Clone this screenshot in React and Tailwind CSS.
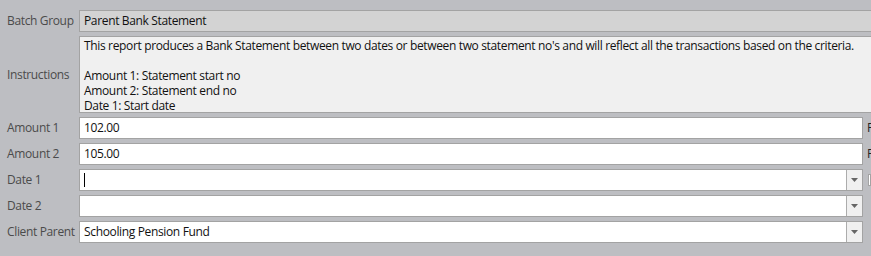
export default function App() {
  const font = { fontFamily: '"Open Sans", "Noto Sans", sans-serif' };

  return (
    <div className="w-[871px] h-[256px] overflow-hidden bg-[#bdbec2] pt-[10px] text-[12px] tracking-[-0.35px]" style={font}>
      {/* Batch Group */}
      <div className="flex items-center h-[22px]">
        <div className="w-[79px] shrink-0 pl-[7px] text-[#4b4b4b]">Batch Group</div>
        <div className="w-[820px] shrink-0 h-[22px] bg-[#d3d3d3] border border-[#a3a3a3] pl-[4px] leading-[20px] text-[#111]">
          Parent Bank Statement
        </div>
      </div>

      {/* Instructions */}
      <div className="flex items-center mt-[4px]">
        <div className="w-[79px] shrink-0 pl-[7px] text-[#4b4b4b]">Instructions</div>
        <div className="w-[820px] shrink-0 h-[77px] bg-[#f0f0f0] border border-[#a3a3a3] pl-[4px] pt-[1px] leading-[15px] text-[#111] whitespace-nowrap">
          <div>This report produces a Bank Statement between two dates or between two statement no's and will reflect all the transactions based on the criteria.</div>
          <div>&nbsp;</div>
          <div>Amount 1: Statement start no</div>
          <div>Amount 2: Statement end no</div>
          <div>Date 1: Start date</div>
        </div>
      </div>

      <div className="flex flex-col gap-[4px] mt-[4px]">
        <Row label="Amount 1" value="102.00" trail="F" />
        <Row label="Amount 2" value="105.00" trail="F" />
        <Row label="Date 1" caret dropdown check />
        <Row label="Date 2" dropdown />
        <Row label="Client Parent" value="Schooling Pension Fund" dropdown />
      </div>
    </div>
  );
}

function Row({ label, value, trail, dropdown, caret, check }) {
  return (
    <div className="flex items-center h-[22px]">
      <div className="w-[79px] shrink-0 pl-[7px] text-[#4b4b4b] whitespace-nowrap">{label}</div>
      <div className="w-[784px] shrink-0 h-[22px] bg-white border border-[#a3a3a3] flex">
        <div className="flex-1 pl-[4px] leading-[20px] text-[#111] flex items-center">
          {caret && <span className="w-px h-[14px] bg-black"></span>}
          {value}
        </div>
        {dropdown && (
          <div className="w-[16px] h-full bg-[#f0f0f0] border-l border-[#acacac] flex items-center justify-center">
            <svg width="7" height="4" viewBox="0 0 7 4">
              <path d="M0 0h7L3.5 4z" fill="#666" />
            </svg>
          </div>
        )}
      </div>
      {trail && <div className="ml-[4px] text-[#222]">{trail}</div>}
      {check && <div className="ml-[5px] w-[12px] h-[12px] bg-white border border-[#a3a3a3]"></div>}
    </div>
  );
}
